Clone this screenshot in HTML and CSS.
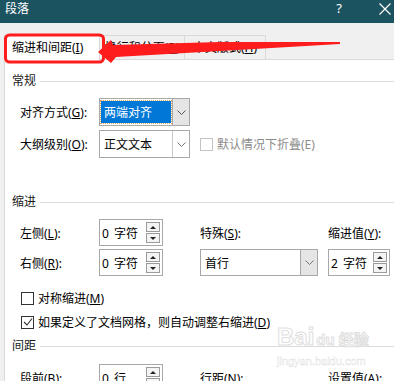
FILE: index.html
```html
<!DOCTYPE html>
<html lang="zh-CN">

<head>
    <meta charset="UTF-8">
    <title>段落</title>
    <link rel="stylesheet" href="styles.css">
</head>

<body>
    <div class="titlebar">
        <span class="title">段落</span>
        <span class="help">?</span>
        <svg class="close" width="12" height="12" viewBox="0 0 12 12">
            <path d="M0.5 0.5 L11.5 11.5 M11.5 0.5 L0.5 11.5" stroke="#fff" stroke-width="1.2" fill="none" />
        </svg>
    </div>

    <div class="tabs">
        <div class="tab tab-indent active">缩进和间距(<u>I</u>)</div>
        <div class="tab tab-break">换行和分页(<u>P</u>)</div>
        <div class="tab tab-asian">中文版式(<u>H</u>)</div>
        <div class="tab-fill"></div>
    </div>

    <div class="panel">
        <div class="group-head"><span>常规</span></div>
        <div class="form-grid general">
            <span class="lbl">对齐方式(<u>G</u>):</span>
            <div class="combo combo-focus">
                <span class="value"><span class="sel">两端对齐</span></span>
                <span class="drop"><svg width="9" height="5" viewBox="0 0 9 5"><path d="M0.5 0.5 L4.5 4.5 L8.5 0.5" stroke="#555" fill="none" /></svg></span>
            </div>
            <span></span>
            <span></span>

            <span class="lbl">大纲级别(<u>O</u>):</span>
            <div class="combo">
                <span class="value">正文文本</span>
                <span class="drop plain"><svg width="9" height="5" viewBox="0 0 9 5"><path d="M0.5 0.5 L4.5 4.5 L8.5 0.5" stroke="#777" fill="none" /></svg></span>
            </div>
            <div class="check disabled"><span class="box"></span><span>默认情况下折叠(E)</span></div>
            <span></span>
        </div>

        <div class="group-head head-indent"><span>缩进</span></div>
        <div class="form-grid indent">
            <span class="lbl">左侧(<u>L</u>):</span>
            <div class="spin"><span class="value">0 字符</span><span class="arrows"><i class="up"></i><i class="down"></i></span></div>
            <span class="lbl">特殊(<u>S</u>):</span>
            <span class="lbl">缩进值(<u>Y</u>):</span>

            <span class="lbl">右侧(<u>R</u>):</span>
            <div class="spin"><span class="value">0 字符</span><span class="arrows"><i class="up"></i><i class="down"></i></span></div>
            <div class="combo combo-wide">
                <span class="value">首行</span>
                <span class="drop"><svg width="9" height="5" viewBox="0 0 9 5"><path d="M0.5 0.5 L4.5 4.5 L8.5 0.5" stroke="#777" fill="none" /></svg></span>
            </div>
            <div class="spin spin-right"><span class="value">2 字符</span><span class="arrows"><i class="up"></i><i class="down"></i></span></div>
        </div>

        <div class="checks">
            <div class="check"><span class="box"></span><span>对称缩进(<u>M</u>)</span></div>
            <div class="check"><span class="box checked"><svg width="10" height="10" viewBox="0 0 10 10"><path d="M1 5 L4 8 L9 1.5" stroke="#333" stroke-width="1.1" fill="none" /></svg></span><span>如果定义了文档网格，则自动调整右缩进(<u>D</u>)</span></div>
        </div>

        <div class="group-head head-spacing"><span>间距</span></div>
        <div class="form-grid spacing">
            <span class="lbl">段前(<u>B</u>):</span>
            <div class="spin"><span class="value">0 行</span><span class="arrows"><i class="up"></i><i class="down"></i></span></div>
            <span class="lbl">行距(<u>N</u>):</span>
            <span class="lbl">设置值(<u>A</u>):</span>
        </div>
    </div>

    <!-- 百度经验水印 -->
    <div class="watermark">
        <div class="wm-top">Bai<span class="wm-du">du</span><span class="wm-cn">经验</span></div>
        <div class="wm-url">jingyan.baidu.com</div>
    </div>

    <!-- 红色标注 -->
    <svg class="markup" width="394" height="381" viewBox="0 0 394 381">
        <rect x="5.5" y="35" width="98" height="27" rx="4" fill="none" stroke="#ff1c1c" stroke-width="3" />
        <polygon points="98,52 111,40 113,45 220,42 340,42 340,44 220,51 116,57 111,63" fill="#ff1c1c" />
    </svg>
</body>

</html>
```
FILE: styles.css
```css
* {
    box-sizing: border-box;
}

html,
body {
    margin: 0;
}

body {
    width: 394px;
    height: 381px;
    overflow: hidden;
    position: relative;
    background: #f0f0f0;
    font-family: "Noto Sans", "Noto Sans CJK SC", sans-serif;
    font-size: 12px;
    color: #000;
}

u {
    text-decoration: underline;
    text-underline-offset: 1px;
}

.titlebar {
    height: 23px;
    background: #1b5360;
    color: #fff;
    display: flex;
    align-items: flex-start;
}

.title {
    margin-left: 5px;
    line-height: 17px;
}

.help {
    margin-left: auto;
    margin-right: 37px;
    line-height: 17px;
    font-size: 13px;
}

.close {
    margin-top: 3px;
    margin-right: 3px;
}

.tabs {
    display: flex;
    padding: 12px 0 0 4px;
}

.tab {
    height: 25px;
    line-height: 23px;
    text-align: center;
    border: 1px solid #d9d9d9;
    border-left: none;
    color: #000;
    white-space: nowrap;
}

.tab.active {
    background: #fff;
    border-left: 1px solid #d9d9d9;
    border-bottom: none;
    text-align: left;
    padding-left: 7px;
}

.tab-indent {
    width: 96px;
}

.tab-break {
    width: 85px;
}

.tab-asian {
    width: 81px;
}

.tab-fill {
    flex: 1;
    border-bottom: 1px solid #d9d9d9;
}

.panel {
    background: #fff;
    margin-left: 4px;
    border-left: 1px solid #d9d9d9;
    height: 330px;
    padding: 13px 0 0 7px;
}

.group-head {
    display: flex;
    align-items: center;
    gap: 4px;
    line-height: 16px;
    color: #1a1a1a;
}

.group-head::after {
    content: "";
    flex: 1;
    height: 1px;
    background: #dcdcdc;
}

.head-indent {
    margin-top: 36px;
}

.head-spacing {
    margin-top: 6px;
}

.form-grid {
    display: grid;
    grid-template-columns: 79px 101px 128px 1fr;
    align-items: center;
    padding-left: 8px;
}

.general {
    margin-top: 9px;
    grid-auto-rows: 28px;
    row-gap: 4px;
}

.indent {
    margin-top: 9px;
    grid-auto-rows: 27px;
    row-gap: 3px;
}

.spacing {
    margin-top: 10px;
    grid-auto-rows: 27px;
}

.lbl {
    white-space: nowrap;
}

.combo {
    width: 91px;
    height: 100%;
    border: 1px solid #a8a8a8;
    background: #fff;
    display: flex;
}

.combo-wide {
    width: 118px;
}

.combo .value {
    flex: 1;
    display: flex;
    align-items: center;
    padding-left: 4px;
}

.combo-focus .value {
    padding: 2px 1px;
}

.sel {
    flex: 1;
    align-self: stretch;
    display: flex;
    align-items: center;
    padding-left: 3px;
    background: #0078d7;
    color: #fff;
    outline: 1px dotted #e0a060;
}

.drop {
    width: 17px;
    display: flex;
    align-items: center;
    justify-content: center;
    background: #e5e5e5;
    border-left: 1px solid #a8a8a8;
}

.drop.plain {
    background: #fff;
    border-left-color: #c8c8c8;
}

.spin {
    width: 64px;
    height: 100%;
    border: 1px solid #a8a8a8;
    background: #fff;
    display: flex;
    align-items: center;
    padding: 0 2px 0 2px;
}

.spin-right {
    width: 62px;
}

.spin .value {
    flex: 1;
    white-space: nowrap;
    word-spacing: 2px;
}

.arrows {
    width: 14px;
    display: flex;
    flex-direction: column;
    gap: 1px;
}

.arrows i {
    height: 10px;
    border: 1px solid #9a9a9a;
    background: #f4f4f4;
    display: flex;
    align-items: center;
    justify-content: center;
}

.arrows i::before {
    content: "";
    border-left: 3px solid transparent;
    border-right: 3px solid transparent;
}

.arrows .up::before {
    border-bottom: 3px solid #222;
}

.arrows .down::before {
    border-top: 3px solid #222;
}

.check {
    display: flex;
    align-items: center;
    gap: 4px;
    white-space: nowrap;
}

.check .box {
    width: 13px;
    height: 13px;
    border: 1px solid #333;
    background: #fff;
    display: flex;
    align-items: center;
    justify-content: center;
}

.check.disabled {
    color: #8c8c8c;
}

.check.disabled .box {
    border-color: #c4c4c4;
}

.checks {
    margin-top: 12px;
    padding-left: 9px;
    display: flex;
    flex-direction: column;
    gap: 4px;
}

.checks .check {
    height: 20px;
}

.watermark {
    position: absolute;
    left: 277px;
    top: 322px;
    color: #fff;
    -webkit-text-stroke: 1px #e0e0e0;
    font-family: "Liberation Sans", sans-serif;
    pointer-events: none;
}

.wm-top {
    font-size: 24px;
    font-weight: bold;
    line-height: 30px;
}

.wm-du {
    font-size: 15px;
    margin-left: 2px;
}

.wm-cn {
    font-family: "Noto Sans CJK SC", sans-serif;
    font-size: 15px;
    margin-left: 4px;
}

.wm-url {
    font-size: 11px;
    line-height: 12px;
    -webkit-text-stroke: 0.4px #e0e0e0;
}

.markup {
    position: absolute;
    left: 0;
    top: 0;
    pointer-events: none;
}
```
